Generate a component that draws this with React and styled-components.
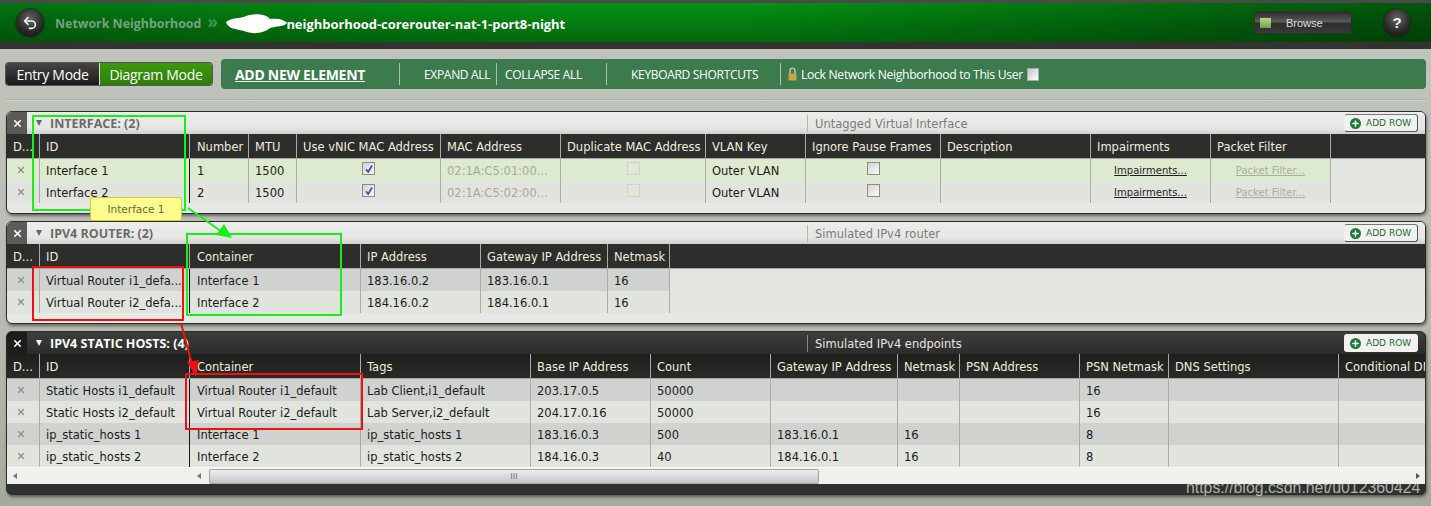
import React from "react";
import styled, { createGlobalStyle } from "styled-components";
import { X, Undo2, Plus } from "lucide-react";

const Global = createGlobalStyle`
  html, body { margin: 0; padding: 0; background: #b4b8ae; }
  * { box-sizing: border-box; }
`;

const Page = styled.div`
  position: relative;
  width: 1431px;
  height: 506px;
  overflow: hidden;
  background: linear-gradient(180deg, #c2c5bd 0%, #b9bcb3 60%, #a3a99b 100%);
  font-family: "DejaVu Sans", sans-serif;
`;

const TopBar = styled.header`
  height: 49px;
  display: flex;
  align-items: center;
  padding: 2px 20px 0 16px;
  border-top: 3px solid #4a4a48;
  border-bottom: 7px solid #333431;
  background:
    linear-gradient(90deg, rgba(0,0,0,.22) 0%, rgba(0,0,0,0) 40%, rgba(0,0,0,0) 52%, rgba(0,0,0,.42) 100%),
    linear-gradient(180deg, #049414 0%, #03780f 60%, #026a0c 100%);
`;

const RoundBtn = styled.div`
  width: 28px;
  height: 28px;
  margin-top: -2px;
  border-radius: 50%;
  flex: none;
  display: flex;
  align-items: center;
  justify-content: center;
  color: #f2f2f2;
  font: bold 15px "Liberation Sans", sans-serif;
  background: radial-gradient(circle at 50% 35%, #666 0%, #2a2a2a 55%, #111 100%);
  box-shadow: 0 0 0 1px rgba(0, 60, 0, .7);
`;

const Crumb = styled.span`
  margin-left: 11px;
  font: bold 12.4px "Open Sans", sans-serif;
  color: #74a283;
`;

const Chevrons = styled.span`
  margin-left: 6px;
  width: 17px;
  font: bold 17px "Open Sans", sans-serif;
  line-height: 14px;
  margin-top: -3px;
  color: #3f9a4d;
`;

const Smudge = styled.svg`
  flex: none;
  margin-left: 0;
  margin-right: -2px;
`;

const Project = styled.span`
  font: bold 13px "Open Sans", sans-serif;
  letter-spacing: -.05px;
  color: #fff;
`;

const Spacer = styled.div`
  flex: 1;
`;

const Browse = styled.div`
  width: 96px;
  height: 21px;
  display: flex;
  align-items: center;
  gap: 15px;
  padding-left: 5px;
  margin-right: 32px;
  margin-top: -2px;
  border-radius: 3px;
  color: #ddd;
  font: 11px "Liberation Sans", sans-serif;
  background: linear-gradient(180deg, #2d2d2d 0%, #5a5a5a 45%, #2e2e2e 55%, #3a3a3a 100%);
  box-shadow: 0 0 0 1px #1f3a20;
`;

const BrowseIcon = styled.span`
  width: 11px;
  height: 10px;
  background: linear-gradient(180deg, #b8d98d, #6f9f4c);
`;

const ToolRow = styled.div`
  display: flex;
  align-items: center;
  gap: 9px;
  padding: 10px 5px 0 6px;
  height: 40px;
`;

const ModeSwitch = styled.div`
  display: flex;
  height: 22px;
  width: 206px;
  flex: none;
  border-radius: 3px;
  overflow: hidden;
  box-shadow: 0 0 0 1px #555;
`;

const Mode = styled.div`
  display: flex;
  align-items: center;
  justify-content: center;
  font: 14px "Open Sans", sans-serif;
  letter-spacing: -.3px;
  flex: ${(p) => (p.$active ? "0 0 113px" : "0 0 93px")};
  color: #fff;
  border-left: ${(p) => (p.$active ? "1px solid #ddd" : "0")};
  background: ${(p) =>
    p.$active
      ? "linear-gradient(180deg,#3c9a0c,#2e7d08)"
      : "linear-gradient(180deg,#454545,#1a1a1a)"};
`;

const ActionBar = styled.div`
  flex: 1;
  height: 30px;
  display: flex;
  align-items: center;
  border-radius: 4px;
  padding-left: 14px;
  background: #3b7b4c;
  color: #fff;
  font: 12px "Open Sans", sans-serif;
  letter-spacing: -.32px;
`;

const AddElement = styled.a`
  width: 164px;
  font: bold 14px "Open Sans", sans-serif;
  letter-spacing: -.3px;
  text-decoration: underline;
`;

const Action = styled.span`
  height: 22px;
  display: flex;
  align-items: center;
  white-space: nowrap;
  border-left: 1px solid #a9c4b0;
  padding-left: ${(p) => p.$pad}px;
  width: ${(p) => p.$w}px;
`;

const LockLabel = styled.span`
  height: 22px;
  display: flex;
  align-items: center;
  gap: 4px;
  white-space: nowrap;
  border-left: 1px solid #a9c4b0;
  padding-left: 7px;
  font-size: 12.2px;
`;

const LockBox = styled.span`
  width: 12px;
  height: 13px;
  border: 1px solid #aaa;
  background: linear-gradient(135deg, #c4c4c4, #fff);
`;

const Rule = styled.div`
  height: 1px;
  margin: 10px 5px 11px 6px;
  background: #a6b89f;
  box-shadow: 0 1px 0 #d0d3cb;
`;

const Stack = styled.div`
  display: flex;
  flex-direction: column;
  gap: 7px;
  margin: 0 5px 0 6px;
`;

const Panel = styled.section`
  overflow: hidden;
  border-radius: 6px;
  border: 1px solid #2c2d2b;
  box-shadow: 1px 2px 3px rgba(0, 0, 0, .45);
  background: ${(p) => (p.$dark ? "#2f312f" : "#e7e8e5")};
`;

const TitleBar = styled.div`
  height: 22px;
  display: flex;
  align-items: center;
  background: ${(p) =>
    p.$dark
      ? "linear-gradient(180deg,#3d3f3d,#2b2c2a)"
      : "linear-gradient(180deg,#ecedea 0%,#e6e7e4 70%,#cfd0cd 100%)"};
`;

const CloseTab = styled.div`
  width: 20px;
  height: 22px;
  flex: none;
  display: flex;
  align-items: center;
  justify-content: center;
  color: #fff;
  background: ${(p) => (p.$dark ? "#1d1d1c" : "#5b5c5a")};
`;

const Caret = styled.span`
  margin-left: 9px;
  width: 0;
  height: 0;
  border-left: 3.5px solid transparent;
  border-right: 3.5px solid transparent;
  border-top: 6px solid ${(p) => (p.$dark ? "#fff" : "#666")};
`;

const PanelTitle = styled.span`
  margin-left: 8px;
  padding-top: 1px;
  width: 757px;
  flex: none;
  font: bold 12.5px "Open Sans", sans-serif;
  color: ${(p) => (p.$dark ? "#fff" : "#6a6b69")};
`;

const PanelDesc = styled.span`
  flex: 1;
  height: 17px;
  display: flex;
  align-items: center;
  padding: 2px 0 0 7px;
  border-left: 1px solid ${(p) => (p.$dark ? "#888" : "#b5b6b3")};
  font-size: 11.5px;
  color: ${(p) => (p.$dark ? "#e6e6e0" : "#7a7b78")};
`;

const AddRow = styled.div`
  width: 74px;
  height: 18px;
  margin-right: 7px;
  flex: none;
  display: flex;
  align-items: center;
  gap: 5px;
  padding-left: 5px;
  border-radius: 3px;
  border: 1px solid ${(p) => (p.$dark ? "transparent" : "#555")};
  border-left-color: transparent;
  border-top-color: ${(p) => (p.$dark ? "transparent" : "#777")};
  background: #f1f2ef;
  color: #1d6a33;
  font: 9px "DejaVu Sans", sans-serif;
`;

const PlusDot = styled.span`
  width: 11px;
  height: 11px;
  border-radius: 50%;
  display: flex;
  align-items: center;
  justify-content: center;
  color: #fff;
  background: #1d7a3a;
`;

const HeadWrap = styled.div`
  height: 25px;
  border-bottom: 1px solid #a6a8a4;
  background: ${(p) =>
    p.$dark ? "linear-gradient(180deg,#1e1f1d,#2a2b29)" : "#2d2d2b"};
`;

const Grid = styled.div`
  display: grid;
  grid-template-columns: ${(p) => p.$cols};
  width: max-content;
  height: ${(p) => p.$h}px;
  border-right: 1px solid #a9aba7;
  background: ${(p) => p.$bg || "transparent"};
`;

const Body = styled.div`
  background: #e3e5e1;
`;

const Cell = styled.div`
  min-width: 0;
  display: flex;
  align-items: center;
  justify-content: ${(p) => (p.$center ? "center" : "flex-start")};
  padding-top: 2px;
  padding-left: ${(p) => (p.$center ? 0 : p.$frozen ? 7 : 6)}px;
  overflow: hidden;
  white-space: nowrap;
  font-size: 11.5px;
  border-left: 1px solid ${(p) => (p.$dark ? "#141414" : "#a9aba7")};
  color: ${(p) => (p.$muted ? "#a6a9a3" : "#1b1b1b")};
  &:first-child { border-left: 0; }
`;

const DeleteCell = styled(Cell)`
  padding-top: 0;
  padding-right: 4px;
`;

const HeadCell = styled(Cell)`
  color: #eeeedd;
`;

const Link = styled.span`
  font-size: 10px;
  margin-top: -1px;
  text-decoration: underline;
  color: ${(p) => (p.$muted ? "#a9aca6" : "#1f1f1f")};
`;

const Check = styled.span`
  width: 13px;
  height: 13px;
  display: flex;
  align-items: center;
  justify-content: center;
  margin-top: -5px;
  border: 1px solid ${(p) => (p.$off ? "#cfd3c8" : "#8a8c88")};
  background: ${(p) =>
    p.$off ? "#e2e6da" : "linear-gradient(135deg,#d2d2d2,#fafafa)"};
`;

const ScrollTrack = styled.div`
  height: 17px;
  display: flex;
  align-items: center;
  border-top: 1px solid #fafafa;
  background: #f0f0ee;
`;

const ScrollFrozen = styled.div`
  width: 190px;
  flex: none;
  padding-left: 6px;
  display: flex;
  align-items: center;
`;

const ArrowL = styled.span`
  width: 0;
  height: 0;
  border-top: 3px solid transparent;
  border-bottom: 3px solid transparent;
  border-right: 4px solid #777;
`;

const ArrowR = styled.span`
  width: 0;
  height: 0;
  margin-right: 5px;
  border-top: 3px solid transparent;
  border-bottom: 3px solid transparent;
  border-left: 4px solid #555;
`;

const Thumb = styled.div`
  width: 610px;
  height: 15px;
  margin-left: 8px;
  flex: none;
  display: flex;
  align-items: center;
  justify-content: center;
  color: #777;
  font: 9px "Liberation Sans", sans-serif;
  border: 1px solid #a2a4a2;
  border-radius: 2px;
  background: linear-gradient(180deg, #eeeeee, #c3c5c7);
`;

const Footer = styled.div`
  height: ${(p) => p.$h}px;
`;

const Box = styled.div`
  position: absolute;
  left: ${(p) => p.$x}px;
  top: ${(p) => p.$y}px;
  width: ${(p) => p.$w}px;
  height: ${(p) => p.$h}px;
  border: 2px solid ${(p) => p.$c};
  pointer-events: none;
`;

const Tip = styled.div`
  position: absolute;
  left: 90px;
  top: 197px;
  width: 92px;
  height: 24px;
  display: flex;
  align-items: center;
  justify-content: center;
  border: 1px solid #cfcf33;
  border-radius: 3px;
  background: #fdfd8e;
  color: #6a6a3e;
  font-size: 10.5px;
`;

const Arrows = styled.svg`
  position: absolute;
  inset: 0;
  pointer-events: none;
`;

const Watermark = styled.div`
  position: absolute;
  left: 1186px;
  top: 479px;
  font: 15.85px "Liberation Sans", sans-serif;
  color: rgba(225, 228, 222, .72);
`;

const c1 = "32px 150px 59px 48px 144px 120px 145px 100px 135px 150px 120px 120px";
const c2 = "32px 150px 171px 120px 127px 62px";
const c3 = "32px 150px 171px 170px 120px 120px 127px 62px 120px 89px 170px 200px";

const T = (text) => ({ text });
const M = (text) => ({ text, muted: true });
const CK = { check: true };
const CO = { check: true, empty: true };
const DIS = { check: true, empty: true, off: true };
const L = { link: "Impairments..." };
const PF = { link: "Packet Filter...", muted: true };

const panels = [
  {
    title: "INTERFACE: (2)",
    desc: "Untagged Virtual Interface",
    cols: c1,
    heads: ["D...", "ID", "Number", "MTU", "Use vNIC MAC Address", "MAC Address", "Duplicate MAC Address", "VLAN Key", "Ignore Pause Frames", "Description", "Impairments", "Packet Filter"],
    rows: [
      { bg: "#deeacf", cells: [T("Interface 1"), T("1"), T("1500"), CK, M("02:1A:C5:01:00..."), DIS, T("Outer VLAN"), CO, T(""), L, PF] },
      { bg: "#e1e3df", cells: [T("Interface 2"), T("2"), T("1500"), CK, M("02:1A:C5:02:00..."), DIS, T("Outer VLAN"), CO, T(""), L, PF] },
    ],
    footer: 10,
  },
  {
    title: "IPV4 ROUTER: (2)",
    desc: "Simulated IPv4 router",
    cols: c2,
    heads: ["D...", "ID", "Container", "IP Address", "Gateway IP Address", "Netmask"],
    rows: [
      { bg: "#d0d2cf", cells: ["Virtual Router i1_defa...", "Interface 1", "183.16.0.2", "183.16.0.1", "16"].map(T) },
      { bg: "#e1e3dd", cells: ["Virtual Router i2_defa...", "Interface 2", "184.16.0.2", "184.16.0.1", "16"].map(T) },
    ],
    footer: 10,
  },
  {
    title: "IPV4 STATIC HOSTS: (4)",
    desc: "Simulated IPv4 endpoints",
    dark: true,
    cols: c3,
    heads: ["D...", "ID", "Container", "Tags", "Base IP Address", "Count", "Gateway IP Address", "Netmask", "PSN Address", "PSN Netmask", "DNS Settings", "Conditional DNS Settings"],
    rows: [
      { bg: "#d0d2cf", cells: ["Static Hosts i1_default", "Virtual Router i1_default", "Lab Client,i1_default", "203.17.0.5", "50000", "", "", "", "16", "", ""].map(T) },
      { bg: "#e1e3dd", cells: ["Static Hosts i2_default", "Virtual Router i2_default", "Lab Server,i2_default", "204.17.0.16", "50000", "", "", "", "16", "", ""].map(T) },
      { bg: "#d0d2cf", cells: ["ip_static_hosts 1", "Interface 1", "ip_static_hosts 1", "183.16.0.3", "500", "183.16.0.1", "16", "", "8", "", ""].map(T) },
      { bg: "#e1e3dd", cells: ["ip_static_hosts 2", "Interface 2", "ip_static_hosts 2", "184.16.0.3", "40", "184.16.0.1", "16", "", "8", "", ""].map(T) },
    ],
    footer: 10,
    scroll: true,
  },
];

function CellContent({ c }) {
  if (c.check) {
    return (
      <Check $off={c.off}>
        {!c.empty && (
          <svg width="10" height="10" viewBox="0 0 10 10">
            <path d="M2 5.2 L4.2 8 L8 1.5" fill="none" stroke="#3a4fb0" strokeWidth="1.7" />
          </svg>
        )}
      </Check>
    );
  }
  if (c.link) return <Link $muted={c.muted}>{c.link}</Link>;
  return c.text;
}

function DataPanel({ p }) {
  return (
    <Panel $dark={p.dark}>
      <TitleBar $dark={p.dark}>
        <CloseTab $dark={p.dark}><X size={11} strokeWidth={3.5} /></CloseTab>
        <Caret $dark={p.dark} />
        <PanelTitle $dark={p.dark}>{p.title}</PanelTitle>
        <PanelDesc $dark={p.dark}>{p.desc}</PanelDesc>
        <AddRow $dark={p.dark}>
          <PlusDot><Plus size={9} strokeWidth={4} /></PlusDot>
          ADD ROW
        </AddRow>
      </TitleBar>
      <HeadWrap $dark={p.dark}>
        <Grid $cols={p.cols} $h={24}>
          {p.heads.map((h, i) => <HeadCell key={i} $frozen={i === 2}>{h}</HeadCell>)}
        </Grid>
      </HeadWrap>
      <Body>
        {p.rows.map((r, i) => (
          <Grid key={i} $cols={p.cols} $h={22} $bg={r.bg}>
            <DeleteCell $center><X size={10} strokeWidth={3} color="#8b8d89" /></DeleteCell>
            {r.cells.map((c, j) => (
              <Cell key={j} $center={c.check || c.link} $muted={c.muted} $frozen={j === 1} $dark={j === 1}>
                <CellContent c={c} />
              </Cell>
            ))}
          </Grid>
        ))}
      </Body>
      {p.scroll && (
        <ScrollTrack>
          <ScrollFrozen><ArrowL /></ScrollFrozen>
          <ArrowL />
          <Thumb>III</Thumb>
          <Spacer />
          <ArrowR />
        </ScrollTrack>
      )}
      <Footer $h={p.footer} />
    </Panel>
  );
}

export default function App() {
  return (
    <Page>
      <Global />
      <TopBar>
        <RoundBtn><Undo2 size={16} strokeWidth={2.4} /></RoundBtn>
        <Crumb>Network Neighborhood</Crumb>
        <Chevrons>»</Chevrons>
        <Smudge width="64" height="22" viewBox="0 0 64 22">
          <path d="M2 9 C8 4 16 6 22 3 C32 0 42 1 46 6 C52 5 60 6 63 10 C60 14 52 13 46 15 C40 20 30 22 20 18 C12 16 4 16 2 9Z" fill="#fff" />
        </Smudge>
        <Project>neighborhood-corerouter-nat-1-port8-night</Project>
        <Spacer />
        <Browse><BrowseIcon />Browse</Browse>
        <RoundBtn>?</RoundBtn>
      </TopBar>
      <ToolRow>
        <ModeSwitch>
          <Mode>Entry Mode</Mode>
          <Mode $active>Diagram Mode</Mode>
        </ModeSwitch>
        <ActionBar>
          <AddElement>ADD NEW ELEMENT</AddElement>
          <Action $pad={24} $w={97}>EXPAND ALL</Action>
          <Action $pad={8} $w={110}>COLLAPSE ALL</Action>
          <Action $pad={24} $w={174}>KEYBOARD SHORTCUTS</Action>
          <LockLabel>
            <svg width="9" height="14" viewBox="0 0 9 14">
              <path d="M2 7 V3.5 a2.5 2.5 0 0 1 5 0 V7" fill="none" stroke="#d8d8d0" strokeWidth="1.2" />
              <rect x="0.5" y="6.5" width="8" height="7" rx="0.5" fill="#c9a24c" />
            </svg>
            Lock Network Neighborhood to This User
            <LockBox />
          </LockLabel>
        </ActionBar>
      </ToolRow>
      <Rule />
      <Stack>
        {panels.map((p) => <DataPanel key={p.title} p={p} />)}
      </Stack>

      <Box $x={32} $y={115} $w={154} $h={96} $c="#16f016" />
      <Box $x={186} $y={233} $w={156} $h={83} $c="#16f016" />
      <Box $x={32} $y={266} $w={152} $h={55} $c="#f01010" />
      <Box $x={185} $y={373} $w={178} $h={57} $c="#f01010" />
      <Tip>Interface 1</Tip>
      <Arrows width="1431" height="506" viewBox="0 0 1431 506">
        <path d="M188 208 L222 232" stroke="#16f016" strokeWidth="2" />
        <path d="M232 238 L216 235 L224 224 Z" fill="#16f016" />
        <path d="M181 323 L194 372" stroke="#f01010" strokeWidth="2" />
        <path d="M196 377 L187 362 L199 360 Z" fill="#f01010" />
      </Arrows>
      <Watermark>https://blog.csdn.net/u012360424</Watermark>
    </Page>
  );
}
